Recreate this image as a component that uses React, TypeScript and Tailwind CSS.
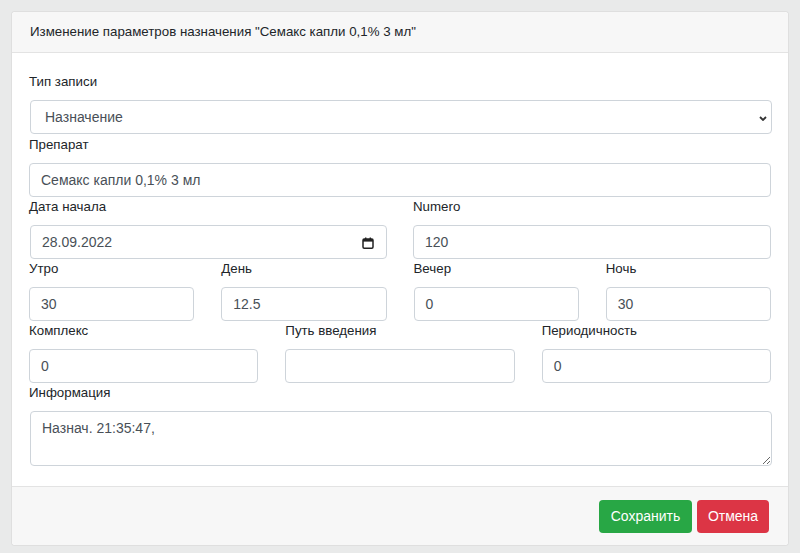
import React from "react"

const font = { fontFamily: '"Liberation Sans", Arial, sans-serif' }

function Label({ children }: { children: React.ReactNode }) {
  return <div className="text-[13.3px] leading-[20px] text-[#212529] mb-[8px]">{children}</div>
}

function Field({ value, className = "" }: { value: string; className?: string }) {
  return (
    <div
      className={`h-[34px] border border-[#ced4da] rounded-[4px] bg-white px-[11px] flex items-center text-[14px] text-[#495057] ${className}`}
    >
      {value}
    </div>
  )
}

export default function App() {
  return (
    <div className="h-screen overflow-hidden bg-[#e9eaea] p-[11px]" style={font}>
      <div className="bg-white border border-[rgba(0,0,0,0.125)] rounded-[4px]">
        {/* header */}
        <div className="h-[41px] bg-[#f7f7f7] border-b border-[#e3e3e3] px-[18px] flex items-center text-[13.3px] text-[#212529] rounded-t-[4px]">
          Изменение параметров назначения "Семакс капли 0,1% 3 мл"
        </div>

        {/* body */}
        <div className="pt-[19px] pb-[20px] px-[17px]">
          <div className="mb-[1px]">
            <Label>Тип записи</Label>
            <div className="relative ml-[1px] mr-[-1px] h-[34px] border border-[#ced4da] rounded-[4px] bg-white pl-[14px] flex items-center text-[14px] text-[#495057]">
              Назначение
              <svg className="absolute right-[4px] top-[15px]" width="8" height="5" viewBox="0 0 8 5">
                <path d="M1 1l3 3 3-3" fill="none" stroke="#333" strokeWidth="1.8" />
              </svg>
            </div>
          </div>

          <div>
            <Label>Препарат</Label>
            <Field value="Семакс капли 0,1% 3 мл" />
          </div>

          <div className="grid grid-cols-2 gap-x-[26px]">
            <div>
              <Label>Дата начала</Label>
              <div className="relative ml-[1px] h-[34px] border border-[#ced4da] rounded-[4px] bg-white pl-[11px] flex items-center text-[14px] text-[#495057]">
                28.09.2022
                <svg className="absolute right-[12px] top-[11px]" width="12" height="12" viewBox="0 0 12 12">
                  <rect x="1" y="2" width="10" height="9.2" rx="1.2" fill="none" stroke="#222" strokeWidth="1.5" />
                  <rect x="1" y="2" width="10" height="2.6" fill="#222" />
                  <rect x="3" y="0.5" width="1.4" height="2" fill="#222" />
                  <rect x="7.6" y="0.5" width="1.4" height="2" fill="#222" />
                </svg>
              </div>
            </div>
            <div>
              <Label>Numero</Label>
              <Field value="120" />
            </div>
          </div>

          <div className="grid grid-cols-4 gap-x-[27px]">
            <div>
              <Label>Утро</Label>
              <Field value="30" />
            </div>
            <div>
              <Label>День</Label>
              <Field value="12.5" />
            </div>
            <div>
              <Label>Вечер</Label>
              <Field value="0" />
            </div>
            <div>
              <Label>Ночь</Label>
              <Field value="30" />
            </div>
          </div>

          <div className="grid grid-cols-3 gap-x-[27px]">
            <div>
              <Label>Комплекс</Label>
              <Field value="0" />
            </div>
            <div>
              <Label>Путь введения</Label>
              <Field value="" />
            </div>
            <div>
              <Label>Периодичность</Label>
              <Field value="0" />
            </div>
          </div>

          <div>
            <Label>Информация</Label>
            <textarea
              readOnly
              defaultValue="Назнач. 21:35:47,"
              className="block ml-[1px] w-full h-[55px] border border-[#ced4da] rounded-[4px] bg-white px-[11px] py-[6px] text-[14px] leading-[21px] text-[#495057] outline-none"
              style={font}
            />
          </div>
        </div>

        {/* footer */}
        <div className="h-[59px] bg-[#f7f7f7] border-t border-[#e3e3e3] pr-[19px] flex items-center justify-end gap-[5px] rounded-b-[4px]">
          <button className="h-[33px] w-[93px] rounded-[4px] bg-[#28a745] text-white text-[14px]" style={font}>
            Сохранить
          </button>
          <button className="h-[33px] w-[72px] rounded-[4px] bg-[#dc3545] text-white text-[14px]" style={font}>
            Отмена
          </button>
        </div>
      </div>
    </div>
  )
}
